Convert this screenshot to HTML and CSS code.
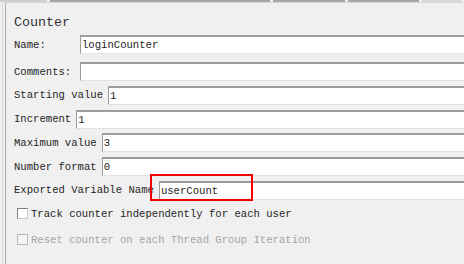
FILE: index.html
```html
<!DOCTYPE html>
<html lang="en">
<head>
  <meta charset="UTF-8">
  <title>Counter</title>
  <link rel="stylesheet" href="styles.css">
</head>
<body>
  <!-- Cut-off toolbar strip along the top -->
  <div class="strip">
    <span class="seg seg-a"></span>
    <span class="seg seg-b"></span>
    <span class="seg seg-c"></span>
    <span class="seg seg-d"></span>
    <span class="seg seg-e"></span>
  </div>

  <div class="frame">
    <div class="panel">
      <div class="title">Counter</div>

      <div class="row row-name">
        <label class="label label-col">Name:</label>
        <div class="field">loginCounter</div>
      </div>
      <div class="row row-comments">
        <label class="label label-col">Comments:</label>
        <div class="field"></div>
      </div>

      <div class="row row-tight">
        <label class="label">Starting value</label>
        <div class="field">1</div>
      </div>
      <div class="row row-tight">
        <label class="label">Increment</label>
        <div class="field">1</div>
      </div>
      <div class="row row-tight">
        <label class="label">Maximum value</label>
        <div class="field">3</div>
      </div>
      <div class="row row-tight">
        <label class="label">Number format</label>
        <div class="field">0</div>
      </div>
      <div class="row row-tight row-export">
        <label class="label">Exported Variable Name</label>
        <div class="field">userCount</div>
        <!-- red annotation drawn over the field -->
        <div class="mark"></div>
      </div>

      <div class="check check-first">
        <span class="box"></span>
        <span class="label">Track counter independently for each user</span>
      </div>
      <div class="check disabled">
        <span class="box"></span>
        <span class="label">Reset counter on each Thread Group Iteration</span>
      </div>
    </div>
  </div>
</body>
</html>
```

FILE: styles.css
```css
body {
  margin: 0;
  background: #f0f0f0;
  font-family: "Liberation Mono", "DejaVu Sans Mono", monospace;
  font-size: 10.6px;
  color: #262626;
  width: 464px;
  height: 264px;
  overflow: hidden;
}
/* top strip */
.strip {
  display: flex;
  height: 2px;
  background: #f0f0f0;
}
.seg {
  height: 2px;
  background: #a8a8a8;
  margin-right: 3px;
}
.seg-a { width: 48px; background: #d0d0d0; }
.seg-b { width: 225px; }
.seg-c { width: 74px; }
.seg-d { width: 72px; }
.seg-e { width: 40px; background: #d8d8d8; }

.frame {
  margin-left: 2px;
  border-left: 1px solid #d6d6d6;
  height: 262px;
}
.panel {
  margin-left: 2px;
  border-left: 1px solid #a9a9a9;
  border-top: 1px solid #d6d6d6;
  padding-left: 8px;
  height: 261px;
  overflow: hidden;
}
.title {
  font-size: 13.3px;
  color: #333;
  height: 20px;
  line-height: 20px;
  margin-top: 10px;
}
.row {
  display: flex;
  align-items: center;
  height: 19px;
  position: relative;
}
.row-name { margin-top: 2px; }
.row-comments { margin-top: 8px; }
.row-tight { margin-top: 4.8px; }
.row-tight .label { margin-right: 5px; }
.label {
  white-space: nowrap;
}
.label-col {
  width: 66px;
  flex: none;
}
.field {
  flex: 1;
  height: 16px;
  line-height: 16px;
  margin-right: -20px;
  padding-left: 1px;
  background: #fff;
  border-top: 2px solid #9c9c9c;
  border-left: 1px solid #9c9c9c;
  border-bottom: 1px solid #e3e3e3;
  color: #1e1e1e;
  white-space: nowrap;
}
.mark {
  position: absolute;
  left: 136px;
  top: -7px;
  width: 99px;
  height: 23px;
  border: 2px solid #f20000;
}
.check {
  display: flex;
  align-items: center;
  height: 16px;
  margin-left: 3px;
}
.check-first { margin-top: 6px; }
.check + .check { margin-top: 10px; }
.box {
  width: 9px;
  height: 9px;
  border: 1px solid #7c7c7c;
  border-right-color: #c8c8c8;
  border-bottom-color: #c8c8c8;
  background: #fff;
  margin-right: 3px;
}
.disabled .label { color: #a6a6a6; }
.disabled .box {
  border-color: #b8b8b8;
  background: #f4f4f4;
}
```
